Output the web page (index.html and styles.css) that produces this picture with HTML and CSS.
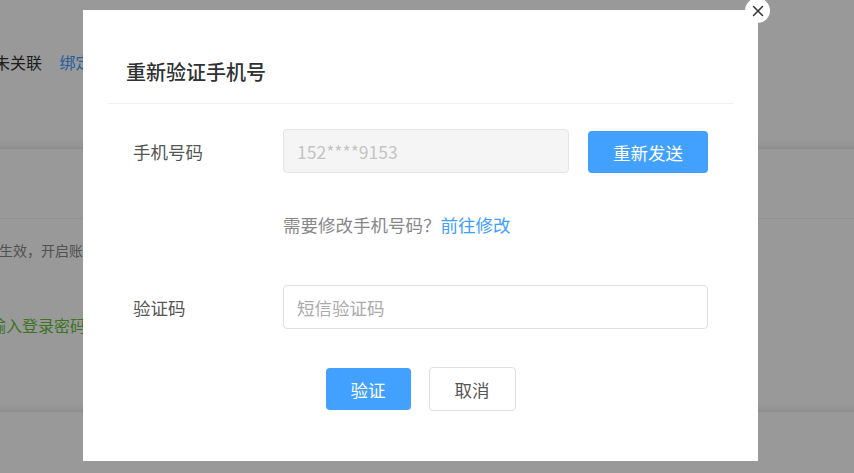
FILE: index.html
```html
<!DOCTYPE html>
<html lang="zh-CN">
<head>
    <meta charset="UTF-8">
    <meta name="viewport" content="width=device-width, initial-scale=1.0">
    <title>重新验证手机号</title>
    <link rel="stylesheet" href="styles.css">
</head>
<body>
    <div class="page">
        <div class="card card-top">
            <div class="bind-row">
                <span class="bind-text">账号未关联</span>
                <a class="bind-link">绑定</a>
            </div>
        </div>
        <div class="card card-main">
            <div class="card-head"></div>
            <div class="tip-row">设置后生效，开启账号保护</div>
            <div class="pwd-row">请输入登录密码</div>
        </div>
    </div>

    <div class="mask"></div>

    <div class="dialog-wrap">
        <div class="dialog">
            <button class="dialog-close" aria-label="关闭">
                <svg width="12" height="12" viewBox="0 0 12 12">
                    <path d="M1.5 1.5 L10.5 10.5 M10.5 1.5 L1.5 10.5" stroke="#333" stroke-width="1.5" fill="none" stroke-linecap="round"/>
                </svg>
            </button>
            <div class="dialog-header">
                <h2 class="dialog-title">重新验证手机号</h2>
            </div>
            <div class="dialog-body">
                <div class="form-row">
                    <label class="form-label">手机号码</label>
                    <div class="form-field">
                        <input class="input input-disabled" type="text" value="152****9153" disabled>
                        <button class="btn btn-primary btn-send">重新发送</button>
                    </div>
                </div>
                <div class="hint-row">
                    需要修改手机号码？<a class="link">前往修改</a>
                </div>
                <div class="form-row">
                    <label class="form-label">验证码</label>
                    <div class="form-field">
                        <input class="input" type="text" placeholder="短信验证码">
                    </div>
                </div>
            </div>
            <div class="dialog-footer">
                <button class="btn btn-primary btn-ok">验证</button>
                <button class="btn btn-default btn-cancel">取消</button>
            </div>
        </div>
    </div>
</body>
</html>
```

FILE: styles.css
```css
* {
    box-sizing: border-box;
}
body {
    margin: 0;
    font-family: "Noto Sans CJK SC", "Noto Sans", sans-serif;
    background: #fff;
    overflow: hidden;
    width: 854px;
    height: 473px;
}

/* page behind the dialog */
.page {
    width: 854px;
}
.card {
    background: #fff;
    border-bottom: 1px solid #ececec;
    box-shadow: inset 0 -9px 9px -9px rgba(0,0,0,0.12);
}
.card-top {
    height: 149px;
    padding-top: 50px;
}
.bind-row {
    margin-left: -38px;
    font-size: 16px;
    line-height: 24px;
    color: #333;
    white-space: nowrap;
}
.bind-link {
    margin-left: 14px;
    color: #409eff;
}
.card-main {
    height: 263px;
}
.card-head {
    height: 70px;
    border-bottom: 1px solid #f0f0f0;
}
.tip-row {
    margin: 19px 0 0 -43px;
    font-size: 14px;
    line-height: 24px;
    color: #888;
    white-space: nowrap;
}
.pwd-row {
    margin: 51px 0 0 -26px;
    font-size: 16px;
    line-height: 24px;
    color: #67c23a;
    white-space: nowrap;
}

.mask {
    position: fixed;
    inset: 0;
    background: rgba(0,0,0,0.4);
}

/* dialog */
.dialog-wrap {
    position: fixed;
    inset: 0;
    padding: 10px 0 0 83px;
}
.dialog {
    position: relative;
    width: 675px;
    height: 451px;
    background: #fff;
    padding-bottom: 50px;
}
.dialog-close {
    position: absolute;
    top: -12px;
    right: -12px;
    width: 25px;
    height: 25px;
    border: none;
    border-radius: 50%;
    background: #fff;
    padding: 0;
    display: flex;
    align-items: center;
    justify-content: center;
    cursor: pointer;
}
.dialog-header {
    margin: 0 25px;
    padding: 47px 0 16px 18px;
    border-bottom: 1px solid #f0f0f0;
}
.dialog-title {
    margin: 0;
    font-size: 20px;
    font-weight: 500;
    line-height: 30px;
    color: #303133;
}
.dialog-body {
    padding: 25px 50px 0;
}
.form-row {
    display: flex;
    align-items: center;
    height: 44px;
}
.form-label {
    width: 150px;
    font-size: 17.5px;
    color: #555;
}
.form-field {
    flex: 1;
    display: flex;
    align-items: center;
    gap: 19px;
}
.input {
    flex: 1;
    height: 44px;
    padding: 0 13px;
    border: 1px solid #dcdfe6;
    border-radius: 4px;
    font-family: inherit;
    font-size: 17.5px;
    color: #555;
    outline: none;
}
.input::placeholder {
    color: #aaa;
}
.input-disabled {
    background: #f5f5f5;
    border-color: #e4e4e4;
    color: #c4c4c4;
}
.hint-row {
    margin: 40px 0 48px 150px;
    font-size: 17.5px;
    line-height: 24px;
    color: #888;
}
.link {
    color: #409eff;
    cursor: pointer;
}
.btn {
    font-family: inherit;
    font-size: 17.5px;
    border-radius: 4px;
    cursor: pointer;
    padding: 0;
}
.btn-primary {
    background: #42a0ff;
    border: none;
    color: #fff;
}
.btn-default {
    background: #fff;
    border: 1px solid #dcdfe6;
    color: #555;
}
.btn-send {
    width: 120px;
    height: 42px;
    margin-top: 2px;
}
.dialog-footer {
    display: flex;
    justify-content: center;
    align-items: center;
    gap: 18px;
    margin-top: 38px;
}
.btn-ok {
    width: 85px;
    height: 42px;
}
.btn-cancel {
    width: 87px;
    height: 44px;
}
```
